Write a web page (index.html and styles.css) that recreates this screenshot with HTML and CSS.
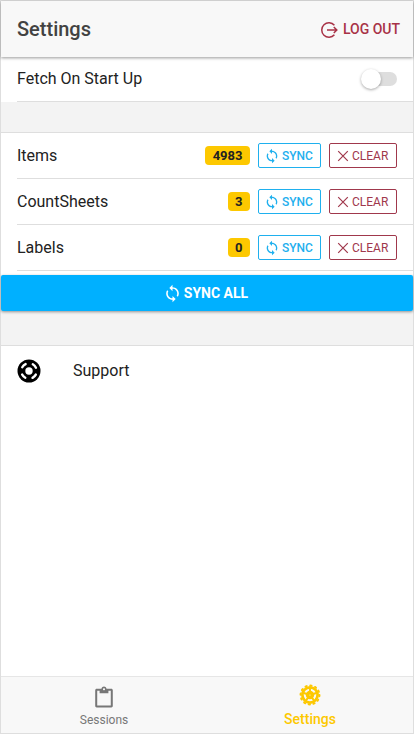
FILE: index.html
```
<!DOCTYPE html>
<html lang="en">
<head>
    <meta charset="UTF-8">
    <meta name="viewport" content="width=device-width, initial-scale=1.0">
    <title>Settings</title>
    <link rel="stylesheet" href="styles.css">
</head>
<body>
    <svg class="symbols">
        <symbol id="sync" viewBox="0 0 24 24">
            <path d="M12 4V1L8 5l4 4V6c3.31 0 6 2.69 6 6 0 1.01-.25 1.97-.7 2.8l1.46 1.46C19.54 15.03 20 13.57 20 12c0-4.42-3.58-8-8-8zm0 14c-3.31 0-6-2.69-6-6 0-1.01.25-1.97.7-2.8L5.24 7.74C4.46 8.97 4 10.43 4 12c0 4.42 3.58 8 8 8v3l4-4-4-4v3z"/>
        </symbol>
        <symbol id="close" viewBox="0 0 12 12">
            <path d="M1.2 1.2l9.6 9.6M10.8 1.2l-9.6 9.6" fill="none" stroke="currentColor" stroke-width="1.2"/>
        </symbol>
    </svg>
    <div class="app">
        <header class="header">
            <h1>Settings</h1>
            <button class="logout">
                <svg viewBox="0 0 18 18" fill="none" stroke="currentColor" stroke-width="1.5">
                    <path d="M14.4 4.3A7.2 7.2 0 1 0 14.4 13.7M7 9H16.8M13.8 6L16.8 9l-3 3"/>
                </svg>
                <span>LOG OUT</span>
            </button>
        </header>

        <main class="content">
            <div class="row fetch">
                <div class="row-inner">
                    <span class="label">Fetch On Start Up</span>
                    <div class="toggle"><div class="knob"></div></div>
                </div>
            </div>
            <div class="divider first"></div>

            <div class="row">
                <div class="row-inner">
                    <span class="label">Items</span>
                    <span class="badge">4983</span>
                    <button class="btn sync"><svg><use href="#sync"/></svg>SYNC</button>
                    <button class="btn clear"><svg><use href="#close"/></svg>CLEAR</button>
                </div>
            </div>
            <div class="row">
                <div class="row-inner">
                    <span class="label">CountSheets</span>
                    <span class="badge">3</span>
                    <button class="btn sync"><svg><use href="#sync"/></svg>SYNC</button>
                    <button class="btn clear"><svg><use href="#close"/></svg>CLEAR</button>
                </div>
            </div>
            <div class="row">
                <div class="row-inner">
                    <span class="label">Labels</span>
                    <span class="badge">0</span>
                    <button class="btn sync"><svg><use href="#sync"/></svg>SYNC</button>
                    <button class="btn clear"><svg><use href="#close"/></svg>CLEAR</button>
                </div>
            </div>
            <button class="sync-all"><svg><use href="#sync"/></svg>SYNC ALL</button>
            <div class="divider second"></div>

            <div class="support">
                <svg viewBox="0 0 24 24">
                    <circle cx="12" cy="12" r="11.5"/>
                    <circle cx="12" cy="12" r="7.7" fill="none" stroke="#fff" stroke-width="2.4" stroke-linecap="round" stroke-dasharray="4.6 7.495" stroke-dashoffset="-3.75"/>
                    <circle cx="12" cy="12" r="3.7" fill="#fff"/>
                </svg>
                <span class="label">Support</span>
            </div>
        </main>

        <nav class="tabs">
            <div class="tab">
                <svg viewBox="0 0 24 24">
                    <path d="M20 3h-5.2C14.4 1.6 13.3.6 12 .6S9.6 1.6 9.2 3H4c-.9 0-1.6.7-1.6 1.6v17.2c0 .9.7 1.6 1.6 1.6h16c.9 0 1.6-.7 1.6-1.6V4.600c0-.9-.7-1.600-1.600-1.600zm-8-.6c.6 0 1.100.5 1.100 1.100s-.5 1.100-1.100 1.100-1.100-.5-1.100-1.100.5-1.100 1.100-1.100zM19.400 21.200H4.600V5.200h2.600v2.800h9.600V5.200h2.600v16z"/>
                </svg>
                <span>Sessions</span>
            </div>
            <div class="tab active">
                <svg viewBox="0 0 24 24" fill="none" stroke="currentColor">
                    <circle cx="12" cy="12" r="10.300" stroke-width="2.200" stroke-linecap="round" stroke-dasharray="1.400 3.993"/>
                    <circle cx="12" cy="12" r="8.300" stroke-width="3"/>
                    <circle cx="12" cy="12" r="2.600" stroke-width="4"/>
                    <path d="M12 10V4M13.900 11.400l5.700-1.900M13.200 13.600l3.500 4.900M10.800 13.600l-3.500 4.900M10.100 11.400L4.400 9.500" stroke-width="2.200"/>
                </svg>
                <span>Settings</span>
            </div>
        </nav>
    </div>
</body>
</html>
```
FILE: styles.css
```
*{
    box-sizing: border-box;
}
body{
    margin: 0;
    font-family: Roboto, sans-serif;
    color: #222;
}
button{
    font-family: inherit;
    margin: 0;
    padding: 0;
    border: none;
    background: none;
}
svg{
    display: block;
    flex: none;
    fill: currentColor;
}
.symbols{
    display: none;
}
.app{
    height: 734px;
    display: flex;
    flex-direction: column;
    border: 1px solid #dedede;
    background-color: #fff;
}
.header{
    height: 56px;
    flex: none;
    display: flex;
    align-items: center;
    justify-content: space-between;
    padding: 0 13px 0 16px;
    background-color: #f8f8f8;
    box-shadow: 0 1px 3px rgba(0, 0, 0, 0.4);
    z-index: 1;
}
.header h1{
    margin: 0;
    font-size: 20px;
    font-weight: 500;
    color: #424242;
}
.logout{
    display: flex;
    align-items: center;
    gap: 5px;
    padding-bottom: 1px;
    color: #a83246;
    font-size: 14px;
    font-weight: 500;
}
.logout svg{
    width: 18px;
    height: 18px;
    margin-top: 2px;
    fill: none;
}
.content{
    flex: 1;
}
.row{
    padding-left: 16px;
}
.row-inner{
    height: 46px;
    display: flex;
    align-items: center;
    padding-right: 16px;
    border-bottom: 1px solid #dedede;
}
.fetch .row-inner{
    height: 45px;
    padding-bottom: 1px;
}
.label{
    font-size: 16px;
    flex: 1;
}
.toggle{
    width: 33px;
    height: 14px;
    border-radius: 7px;
    background-color: #dedede;
}
.knob{
    width: 20px;
    height: 20px;
    margin: -3px 0 0 -3px;
    border-radius: 50%;
    background-color: #fff;
    box-shadow: 0 1px 3px rgba(0, 0, 0, 0.35);
}
.divider{
    background-color: #f3f3f3;
    border-bottom: 1px solid #dedede;
}
.first{
    height: 31px;
}
.second{
    height: 35px;
}
.badge{
    height: 19px;
    padding: 0 7.5px;
    line-height: 19px;
    border-radius: 4px;
    background-color: #fdc800;
    font-size: 13px;
    font-weight: 700;
}
.btn{
    height: 25px;
    display: flex;
    align-items: center;
    margin-left: 8px;
    border: 1px solid;
    border-radius: 2px;
    font-size: 12px;
    font-weight: 500;
}
.sync{
    width: 63px;
    padding-left: 5px;
    gap: 2px;
    color: #1fb0ee;
}
.sync svg{
    width: 16px;
    height: 16px;
}
.clear{
    width: 68px;
    padding-left: 7px;
    gap: 3px;
    color: #a0384c;
    font-weight: 400;
}
.clear svg{
    width: 12px;
    height: 12px;
}
.sync-all{
    width: 100%;
    height: 36px;
    margin-top: 4px;
    padding-right: 3px;
    display: flex;
    align-items: center;
    justify-content: center;
    gap: 2px;
    color: #fff;
    background-color: #00b0ff;
    border-radius: 2px;
    box-shadow: 0 1px 3px rgba(0, 0, 0, 0.4);
    position: relative;
    font-size: 14px;
    font-weight: 700;
}
.sync-all svg{
    width: 19px;
    height: 19px;
}
.support{
    height: 49px;
    display: flex;
    align-items: center;
    gap: 32px;
    padding-left: 16px;
}
.support svg{
    width: 24px;
    height: 24px;
    color: #000;
}
.tabs{
    height: 57px;
    flex: none;
    display: flex;
    background-color: #f8f8f8;
    border-top: 1px solid #e6e6e6;
}
.tab{
    flex: 1;
    display: flex;
    flex-direction: column;
    align-items: center;
    padding-top: 9px;
    font-size: 12px;
    color: #777;
}
.tab svg{
    width: 22px;
    height: 22px;
    margin-bottom: 5px;
}
.active{
    padding-top: 7px;
    font-size: 14px;
    font-weight: 500;
    color: #fdc800;
}
.active svg{
    fill: none;
}
```
